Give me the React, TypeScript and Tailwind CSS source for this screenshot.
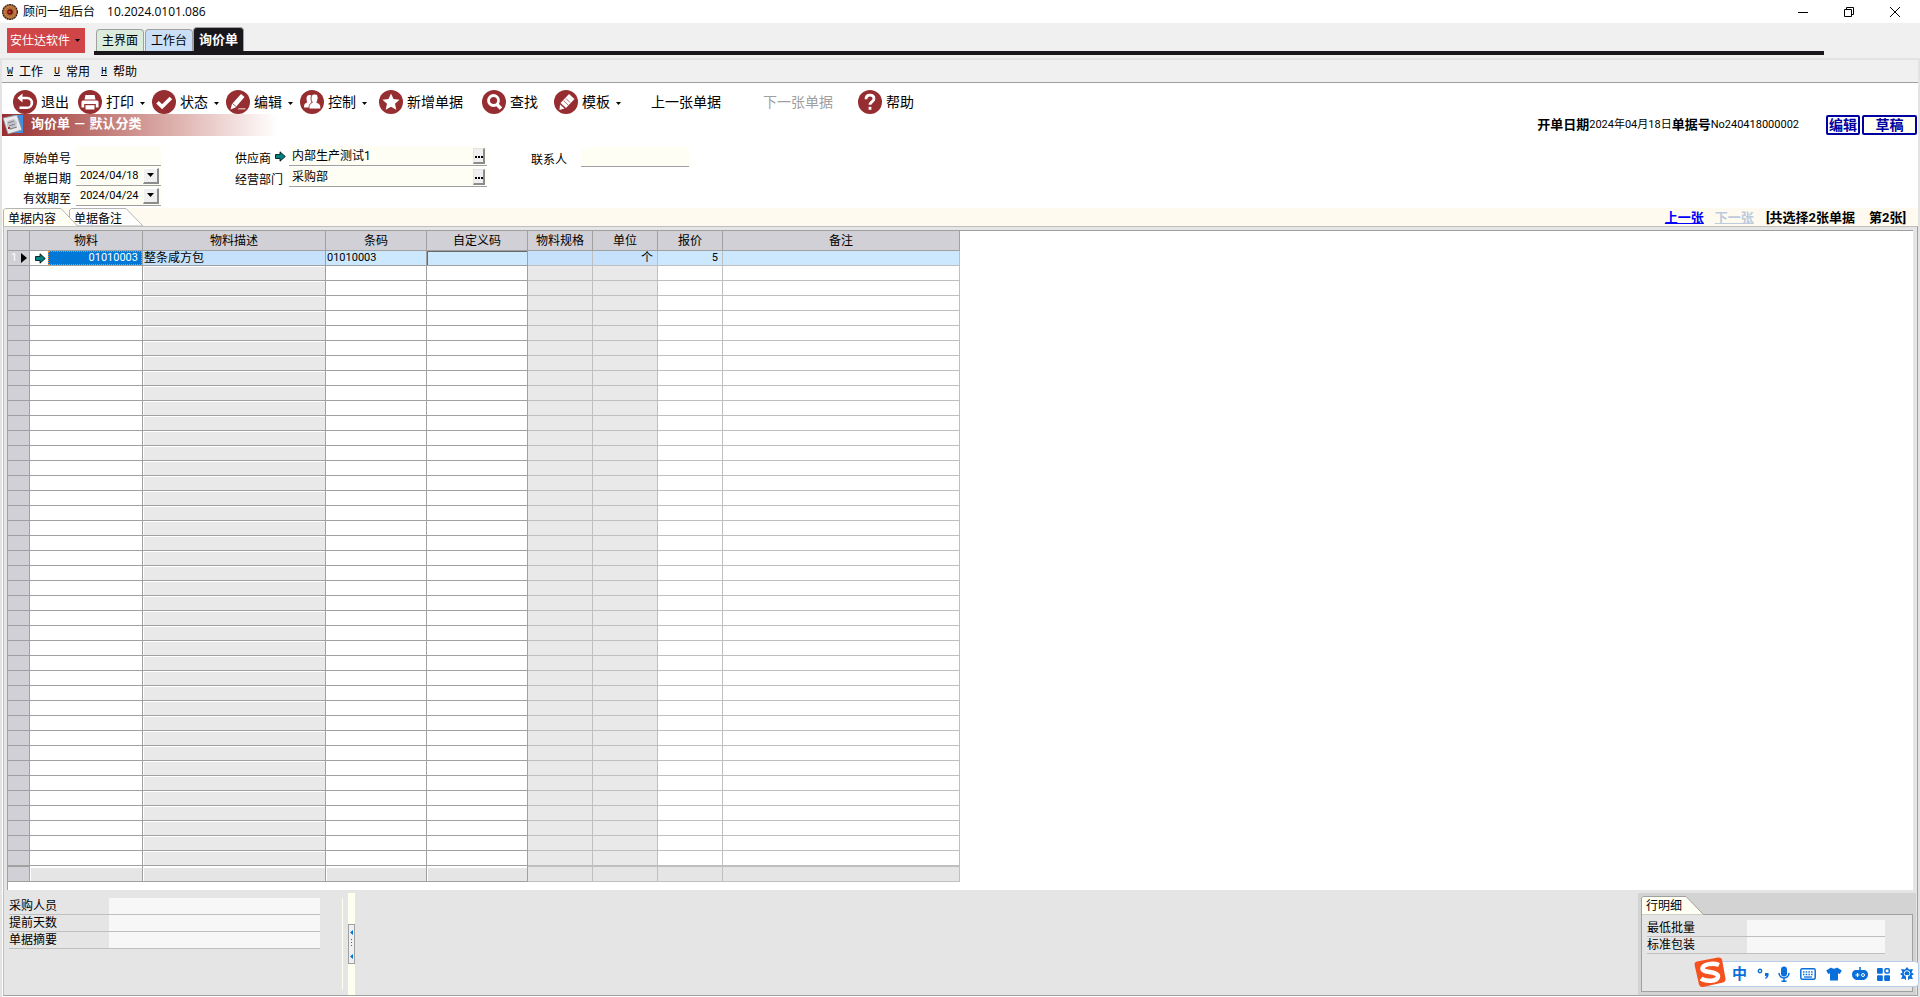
import { useState } from "react";
import type { ReactNode } from "react";

type IconName =
  | "exit"
  | "print"
  | "check"
  | "pencil"
  | "users"
  | "star"
  | "search"
  | "template"
  | "help";

const icons: Record<IconName, ReactNode> = {
  exit: (
    <g fill="none" stroke="#fff" strokeWidth="2.6">
      <path d="M7 8h7a4.900 4.900 0 0 1 0 9.800H6.500" />
      <path d="M9.500 3.500 4.300 8l5.200 4.500z" fill="#fff" stroke="none" />
    </g>
  ),
  print: (
    <g fill="#fff">
      <path d="M7.500 5h9l1 4.500h-11z" />
      <path d="M5 10.500h14a1.500 1.500 0 0 1 1.500 1.500v5.500h-2.700V14H6.200v3.500H3.500V12A1.500 1.500 0 0 1 5 10.500z" />
      <path d="M7.500 15.200h9v4.300h-9z" />
    </g>
  ),
  check: (
    <path d="m5.500 12.200 4.600 4.600 8.800-8.800" fill="none" stroke="#fff" strokeWidth="3.6" />
  ),
  pencil: (
    <g fill="#fff">
      <path d="M15 4 18.500 7 9.500 17.500 4.500 19.500 6 14z" />
      <path d="M13 18h6.500v1.600h-8z" fill="#d9a9aa" />
      <path d="m6.500 13.500 3.500 3" stroke="#962d30" strokeWidth="0.8" />
    </g>
  ),
  users: (
    <g fill="#fff">
      <path d="M9.500 5C12 5 12.500 7 12.300 9c0 2-.8 3-1 4l-1.500 4.500H4c0-3.500.8-4 3.200-5C6.800 11 6.500 10 6.500 8.500 6.500 6 7.800 5 9.500 5z" />
      <path
        d="M14.500 4c3 0 4 2.200 3.500 5-.2 1.500-.8 2.300-1.200 3.500 2.800 1 4 1.800 4 6.500H9c0-4.300.8-5.300 3.300-6.500-.6-1.200-1.200-2-1.300-3.500-.2-3 1-5 3.500-5z"
        stroke="#962d30"
        strokeWidth="0.9"
      />
    </g>
  ),
  star: (
    <path
      d="m12 3.500 2.500 5.600 6 .6-4.500 4.100 1.300 6-5.300-3.100-5.300 3.100 1.300-6-4.500-4.100 6-.6z"
      fill="#fff"
    />
  ),
  search: (
    <g fill="none" stroke="#fff">
      <circle cx="11.500" cy="10.500" r="5" strokeWidth="2.8" />
      <path d="m15 14.500 4 4" strokeWidth="3.4" />
    </g>
  ),
  template: (
    <g fill="#fff">
      <path d="m15 4 5.500 5-8.500 9-5.500-5z" />
      <path d="m6 14.500 4.500 4-5 1.500z" />
      <path d="m9.500 10.500 5 4.800M12 8.500l4 4" stroke="#962d30" strokeWidth="0.7" />
    </g>
  ),
  help: (
    <g fill="none" stroke="#fff" strokeWidth="2.800">
      <path d="M8 9.200C8 6.500 9.800 5.200 12 5.200s4 1.300 4 3.600c0 2.700-4 2.900-4 6" />
      <path d="M12 16.800v3" />
    </g>
  ),
};

type Tool = {
  label: string;
  icon?: IconName;
  menu?: boolean;
  disabled?: boolean;
  space: string;
};

const tools: Tool[] = [
  { label: "退出", icon: "exit", space: "ml-[11px]" },
  { label: "打印", icon: "print", menu: true, space: "ml-[9px]" },
  { label: "状态", icon: "check", menu: true, space: "ml-[7px]" },
  { label: "编辑", icon: "pencil", menu: true, space: "ml-[7px]" },
  { label: "控制", icon: "users", menu: true, space: "ml-[7px]" },
  { label: "新增单据", icon: "star", space: "ml-3" },
  { label: "查找", icon: "search", space: "ml-[19px]" },
  { label: "模板", icon: "template", menu: true, space: "ml-4" },
  { label: "上一张单据", space: "ml-[30px]" },
  { label: "下一张单据", disabled: true, space: "ml-[42px]" },
  { label: "帮助", icon: "help", space: "ml-[25px]" },
];

const columns = [
  { label: "物料", width: "w-[113px]", cell: "border-[#a0a0a0]", readOnly: false },
  { label: "物料描述", width: "w-[183px]", cell: "border-[#a0a0a0]", readOnly: true },
  { label: "条码", width: "w-[101px]", cell: "border-[#a0a0a0]", readOnly: false },
  { label: "自定义码", width: "w-[101px]", cell: "border-[#a0a0a0]", readOnly: false },
  { label: "物料规格", width: "w-[65px]", cell: "border-[#bfbfbf]", readOnly: true },
  { label: "单位", width: "w-[65px]", cell: "border-[#bfbfbf]", readOnly: true },
  { label: "报价", width: "w-[65px]", cell: "border-[#bfbfbf]", readOnly: false },
  { label: "备注", width: "w-[237px]", cell: "border-[#bfbfbf]", readOnly: false },
];

const emptyRows = Array.from({ length: 40 }, (_, i) => i);

function Caret() {
  return (
    <svg className="w-[5px] h-[3px]" viewBox="0 0 5 3">
      <path d="M0 0h5L2.500 3z" fill="#000" />
    </svg>
  );
}

function GreenArrow() {
  return (
    <svg className="w-[11px] h-[11px] shrink-0" viewBox="0 0 11 11">
      <path
        d="M.5 3.500H5V.800l5.300 4.700L5 10.200V7.500H.5z"
        fill="#008080"
        stroke="#000"
        strokeWidth="0.800"
      />
    </svg>
  );
}

function ToolButton({ tool }: { tool: Tool }) {
  return (
    <button
      type="button"
      disabled={tool.disabled}
      className={`${tool.space} flex items-center h-6 text-sm leading-6 whitespace-nowrap ${
        tool.disabled ? "text-[#a0a0a0]" : "text-black"
      }`}
    >
      {tool.icon && (
        <svg className="w-6 h-6 mr-1" viewBox="0 0 24 24">
          <circle cx="12" cy="12" r="12" fill="#962d30" />
          {icons[tool.icon]}
        </svg>
      )}
      {tool.label}
      {tool.menu && (
        <span className="ml-1.5 mt-0.5">
          <Caret />
        </span>
      )}
    </button>
  );
}

function TitleBar() {
  return (
    <header className="flex items-center h-[23px] bg-white pl-0.5">
      <svg className="w-4 h-4" viewBox="0 0 16 16">
        <circle cx="8" cy="8" r="7.400" fill="#b06a35" stroke="#2e1a10" strokeWidth="1.200" strokeDasharray="2 0.600" />
        <circle cx="8" cy="8" r="5.200" fill="none" stroke="#d99a5c" strokeWidth="1" strokeDasharray="1.500 1.500" />
        <circle cx="8" cy="8" r="2.800" fill="#6e0f12" />
        <path d="M6.500 7h2v2h-2z" fill="#e0302c" />
      </svg>
      <h1 className="ml-[5px] text-xs">顾问一组后台</h1>
      <span className="ml-3 text-xs [font-family:'Open_Sans',sans-serif]">
        10.2024.0101.086
      </span>
      <div className="ml-auto flex gap-9 pr-5">
        <button type="button" aria-label="最小化">
          <svg className="w-2.5 h-2.5" viewBox="0 0 10 10">
            <path d="M0 5.500h10" stroke="#000" />
          </svg>
        </button>
        <button type="button" aria-label="还原">
          <svg className="w-2.5 h-2.5" viewBox="0 0 10 10">
            <path d="M.5 2.500h7v7h-7zM2.500 2.500v-2h7v7h-2" fill="none" stroke="#000" />
          </svg>
        </button>
        <button type="button" aria-label="关闭">
          <svg className="w-2.5 h-2.5" viewBox="0 0 10 10">
            <path d="m0 0 10 10M10 0 0 10" stroke="#000" />
          </svg>
        </button>
      </div>
    </header>
  );
}

function WindowTabs() {
  return (
    <div className="flex h-[35px] bg-[#f0f0f0] pl-[7px] pr-24 text-xs">
      <button
        type="button"
        className="mt-[5px] flex items-center justify-between h-[25px] w-[78px] pl-[3px] pr-[5px] bg-[#d04648] text-white whitespace-nowrap"
      >
        安仕达软件
        <Caret />
      </button>
      <nav className="ml-[9px] mt-1 flex flex-1 items-end h-7 border-b-4 border-[#1a171c] pl-0.5">
        <button
          type="button"
          className="w-12 h-[22px] leading-[20px] mr-px rounded-t-sm border border-b-0 border-[#a0a0a0] bg-[#dcecdc]"
        >
          主界面
        </button>
        <button
          type="button"
          className="w-12 h-[22px] leading-[20px] rounded-t-sm border border-b-0 border-[#a0a0a0] bg-[#cadef6]"
        >
          工作台
        </button>
        <button
          type="button"
          className="w-[51px] h-6 rounded-t-sm border border-b-0 border-[#a0a0a0] bg-[#1a171c] text-[13px] leading-[22px] font-bold text-white"
        >
          询价单
        </button>
      </nav>
    </div>
  );
}

function MenuBar() {
  return (
    <nav className="flex items-center gap-[11px] h-[23px] border-b border-[#a0a0a0] bg-[#f0f0f0] pl-[5px] pt-0.5 text-xs">
      {[
        ["W", "工作"],
        ["U", "常用"],
        ["H", "帮助"],
      ].map(([key, label]) => (
        <button type="button" key={key} className="flex items-center gap-1.5">
          <u className="text-[10px] [font-family:'Liberation_Mono',monospace]">{key}</u>
          {label}
        </button>
      ))}
    </nav>
  );
}

function DocumentHeading() {
  return (
    <div className="flex items-center justify-between h-[22px]">
      <div className="flex items-center w-[275px] h-[22px] bg-linear-to-r from-[#962d30] to-white">
        <svg className="w-[22px] h-[20px]" viewBox="0 0 22 20">
          <path d="M10 0h11v18H10z" fill="#3f8fe0" />
          <path d="m1 3 14-3 5 15-14 4z" fill="#e9e9ec" stroke="#8b8f9a" strokeWidth="0.800" />
          <path d="m5 6 7-2 3 3-1 6-6 2-3-4z" fill="#c4c6cc" />
          <path d="m6 8 6-2M7 11l6-2M8 14l7-2" stroke="#666a75" strokeWidth="0.800" />
          <path d="M6 12h2v2H6z" fill="#b02a2a" />
        </svg>
        <h2 className="ml-[7px] mb-0.5 text-[13px] leading-5 font-bold text-white whitespace-pre">
          询价单 － 默认分类
        </h2>
      </div>
      <div className="flex items-center whitespace-nowrap leading-5">
        <b className="text-[13px]">开单日期</b>
        <span className="text-[11px]">2024年04月18日</span>
        <b className="text-[13px]">单据号</b>
        <span className="text-[11px]">No240418000002</span>
        <button
          type="button"
          className="ml-[27px] w-[34px] h-5 border-2 border-[#0000a0] rounded-xs bg-white text-sm leading-4 font-bold text-[#0000a0]"
        >
          编辑
        </button>
        <button
          type="button"
          className="ml-0.5 mr-px w-[55px] h-5 border-2 border-[#0000a0] rounded-xs bg-[#fffff4] text-sm leading-4 font-bold text-[#0000a0]"
        >
          草稿
        </button>
      </div>
    </div>
  );
}

type FieldProps = {
  id: string;
  label: string;
  value?: string;
  labelWidth: string;
  width: string;
  arrow?: boolean;
  action?: "date" | "lookup";
};

function Field({ id, label, value = "", labelWidth, width, arrow, action }: FieldProps) {
  return (
    <div className="flex items-center h-5">
      <label htmlFor={id} className={`${labelWidth} flex items-start gap-1 pt-1.5 text-xs leading-4`}>
        {label}
        {arrow && <GreenArrow />}
      </label>
      <div className={`${width} flex items-center h-5 border-b border-[#a0a0a0] bg-[#fefef4]`}>
        <input
          id={id}
          defaultValue={value}
          className={`min-w-0 flex-1 bg-transparent outline-none leading-4 ${
            action === "date" ? "pl-1 text-[11px]" : "pl-[3px] text-xs"
          }`}
        />
        {action === "date" && (
          <button
            type="button"
            aria-label={`选择${label}`}
            className="flex items-center justify-center w-4 h-4 mr-0.5 border-r-2 border-b-2 border-t border-l border-t-white border-l-white border-[#8c8c8c] bg-[#f0f0f0]"
          >
            <svg className="w-[7px] h-1 shrink-0" viewBox="0 0 7 4">
              <path d="M0 0h7L3.500 4z" />
            </svg>
          </button>
        )}
        {action === "lookup" && (
          <button
            type="button"
            aria-label={`查找${label}`}
            className="flex items-end justify-center w-3 h-4 pb-1 mr-0.5 border-r-2 border-b-2 border-t border-l border-t-[#e3e3e3] border-l-[#e3e3e3] border-[#8c8c8c] bg-[#f0f0f0]"
          >
            <svg className="w-2 h-0.5 shrink-0" viewBox="0 0 8 2">
              <path d="M0 0h2v2H0zM3 0h2v2H3zM6 0h2v2H6z" />
            </svg>
          </button>
        )}
      </div>
    </div>
  );
}

function DocumentForm() {
  return (
    <form className="flex items-start h-[72px] pt-2.5 pl-[21px]">
      <div className="flex flex-col">
        <Field id="origin" label="原始单号" labelWidth="w-[53px]" width="w-[85px]" />
        <Field
          id="date"
          label="单据日期"
          value="2024/04/18"
          labelWidth="w-[53px]"
          width="w-[85px]"
          action="date"
        />
        <Field
          id="expire"
          label="有效期至"
          value="2024/04/24"
          labelWidth="w-[53px]"
          width="w-[85px]"
          action="date"
        />
      </div>
      <div className="ml-[74px] flex flex-col gap-px">
        <Field
          id="supplier"
          label="供应商"
          value="内部生产测试1"
          labelWidth="w-[54px]"
          width="w-[198px]"
          action="lookup"
          arrow
        />
        <Field
          id="department"
          label="经营部门"
          value="采购部"
          labelWidth="w-[54px]"
          width="w-[198px]"
          action="lookup"
        />
      </div>
      <div className="ml-11 pt-px">
        <Field id="contact" label="联系人" labelWidth="w-[50px]" width="w-[108px]" />
      </div>
    </form>
  );
}

function DetailTabs() {
  const [tab, setTab] = useState(0);

  return (
    <div className="flex items-center h-[18px] bg-[#fffaf0] text-xs leading-[18px]">
      <div className="relative flex h-[18px] w-[150px]">
        <svg className="absolute inset-0 w-[150px] h-[18px]" viewBox="0 0 150 18">
          <path d="M67.500 18V2l2-1.500H124L141 18z" fill="#fff" stroke="#b4b4b4" />
          <path d="M1.500 19V2l2-1.500H59L76 18.500z" fill="#fffff4" stroke="#b4b4b4" />
        </svg>
        {["单据内容", "单据备注"].map((label, i) => (
          <button
            type="button"
            key={label}
            aria-pressed={tab === i}
            onClick={() => setTab(i)}
            className="relative w-[66px] pl-1.5 pt-0.5 text-left"
          >
            {label}
          </button>
        ))}
      </div>
      <div className="ml-auto flex items-center pr-3 pt-0.5 text-[13px] font-bold whitespace-pre">
        <a href="#prev" className="text-[#0000ff] underline">
          上一张
        </a>
        <a href="#next" className="ml-[11px] text-[#bccbdd] underline">
          下一张
        </a>
        <span className="ml-3">[共选择2张单据</span>
        <span className="ml-[14px]">第2张]</span>
      </div>
    </div>
  );
}

function ItemGrid() {
  return (
    <table className="table-fixed border-separate border-spacing-0 w-[952px] text-xs leading-[14px]">
      <thead>
        <tr className="h-5 bg-[#d0d0d6]">
          <th className="w-[22px] p-0 border-r border-b border-[#a0a0a0]" />
          {columns.map((c) => (
            <th
              key={c.label}
              className={`${c.width} p-0 border-r border-b border-[#a0a0a0] font-normal`}
            >
              {c.label}
            </th>
          ))}
        </tr>
      </thead>
      <tbody>
        <tr className="h-[15px] bg-[#cce8ff]">
          <td className="p-0 border-r border-b border-[#a0a0a0] bg-[#d0d0d6]">
            <div className="flex items-center justify-between pl-[3px] pr-0.5 text-[11px] text-white">
              1
              <svg className="w-1.5 h-2.5" viewBox="0 0 6 10">
                <path d="M0 0v10l6-5z" fill="#000" />
              </svg>
            </div>
          </td>
          <td className="p-0 border-r border-b border-[#a0a0a0] bg-white">
            <div className="flex items-center h-[14px] pl-[5px]">
              <GreenArrow />
              <span className="ml-0.5 flex-1 h-[14px] border border-dotted border-[#ff8728] bg-[#0078d7] pr-[3px] text-right text-[11px] leading-3 text-white">
                01010003
              </span>
            </div>
          </td>
          <td className="p-0 pl-px border-r border-b border-[#a0a0a0] bg-[#c5e1fb]">整条咸方包</td>
          <td className="p-0 pl-px border-r border-b border-[#a0a0a0] text-[11px]">01010003</td>
          <td className="p-0 border-r border-b border-[#a0a0a0] shadow-[inset_1px_1px_0_#696969]" />
          <td className="p-0 border-r border-b border-[#bfbfbf] bg-[#c5e1fb]" />
          <td className="p-0 pr-1 border-r border-b border-[#bfbfbf] bg-[#c5e1fb] text-right">个</td>
          <td className="p-0 pr-1 border-r border-b border-[#bfbfbf] text-right text-[11px]">5</td>
          <td className="p-0 border-r border-b border-[#bfbfbf]" />
        </tr>
        {emptyRows.map((row) => (
          <tr key={row} className="h-[15px]">
            <td className="p-0 border-r border-b border-[#a0a0a0] bg-[#d0d0d6]" />
            {columns.map((c, i) => (
              <td
                key={c.label}
                className={`p-0 border-r border-b ${c.cell} ${
                  c.readOnly ? "bg-[#e9e9e9]" : "bg-white"
                } ${i === 1 ? "shadow-[inset_1px_1px_0_#fff]" : ""}`}
              />
            ))}
          </tr>
        ))}
      </tbody>
      <tfoot>
        <tr className="h-4">
          <td className="p-0 border-r border-b border-t border-[#a0a0a0] bg-[#d0d0d6]" />
          {columns.map((c, i) => (
            <td
              key={c.label}
              className={`p-0 border-r border-b bg-[#e5e5e5] ${c.cell} ${
                i < 4 ? "shadow-[inset_1px_2px_0_#fff]" : "border-t"
              }`}
            />
          ))}
        </tr>
      </tfoot>
    </table>
  );
}

function NoteField({ id, label, width }: { id: string; label: string; width: string }) {
  return (
    <div className="flex h-[17px] border-b border-[#bfbfbf]">
      <label htmlFor={id} className="w-[100px] text-xs leading-4">
        {label}
      </label>
      <input id={id} className={`${width} h-4 bg-[#f7f7f7] outline-none text-xs`} />
    </div>
  );
}

function FooterPanel() {
  return (
    <div className="flex flex-1 min-h-[105px] pl-[5px] pt-[3px]">
      <div className="w-[334px] mt-[5px] mb-[5px] border-r border-[#fffff0]">
        <div className="w-[311px]">
          <NoteField id="buyer" label="采购人员" width="w-[211px]" />
          <NoteField id="lead" label="提前天数" width="w-[211px]" />
          <NoteField id="summary" label="单据摘要" width="w-[211px]" />
        </div>
      </div>
      <div className="ml-[5px] w-[7px] bg-[#fffff0] pt-[31px]">
        <button
          type="button"
          aria-label="收起"
          className="block w-[7px] h-10 border border-[#a0a0a0] bg-[#f0f0f0]"
        >
          <svg className="w-[5px] h-[38px]" viewBox="0 0 5 38">
            <path d="M4 5v5L1 7.500zM4 29v5l-3-2.500z" fill="#0078d7" />
            <path d="M2 14h1v1H2zM2 17h1v1H2zM2 20h1v1H2z" fill="#0078d7" />
          </svg>
        </button>
      </div>
      <section className="ml-auto mr-px flex flex-col w-[278px] p-[3px] bg-[#d3d3d3]">
        <div className="relative h-[18px]">
          <svg className="absolute left-0 top-0 w-[64px] h-[19px]" viewBox="0 0 64 19">
            <path d="M.5 19V2l2-1.500H45L62.500 18.500V19z" fill="#fffff4" stroke="#a0a0a0" />
          </svg>
          <h3 className="relative pl-[5px] text-xs leading-5">行明细</h3>
        </div>
        <div className="flex-1 border border-[#a0a0a0] bg-[#e5e5e5] pl-[5px] pt-[5px]">
          <div className="w-[238px]">
            <NoteField id="minimum" label="最低批量" width="w-[138px]" />
            <NoteField id="package" label="标准包装" width="w-[138px]" />
          </div>
        </div>
      </section>
    </div>
  );
}

// input method toolbar floating over the window corner
function InputMethodBar() {
  return (
    <div className="fixed right-px bottom-2.5 flex items-center justify-between h-[26px] w-[219px] pl-[31px] pr-1 rounded-sm border border-[#b7cdea] bg-white text-[#0a6fdb]">
      <svg className="absolute -left-[7px] -top-[5px] w-8 h-[31px]" viewBox="0 0 32 31">
        <path d="M3 4.500 24 .5q3-.5 4 2l3.500 19q.3 3-2.500 4L9 30q-3 .5-4-2.500L.6 8Q.2 5.200 3 4.500z" fill="#f4511e" />
        <path
          d="M25 8C19 5.500 9 7 8.500 11.500S24.500 14 24 19.500 11 24.500 7 21.500"
          fill="none"
          stroke="#fff"
          strokeWidth="4.500"
        />
      </svg>
      <span className="text-[15px] leading-5 font-bold">中</span>
      <svg className="w-3 h-3" viewBox="0 0 12 12">
        <circle cx="3" cy="3" r="1.700" fill="none" stroke="currentColor" strokeWidth="1.400" />
        <path d="M8 5h3.500c.5 3-.5 5-3 6l-.5-1c1-.6 1.400-1.200 1.400-2H8z" fill="currentColor" />
      </svg>
      <svg className="w-3 h-4" viewBox="0 0 12 16" fill="none" stroke="currentColor" strokeWidth="1.500">
        <rect x="3" y="0.500" width="6" height="10" rx="3" fill="currentColor" stroke="none" />
        <path d="M1 7c0 6.500 10 6.500 10 0M6 12v3.200M3.500 15.200h5" />
      </svg>
      <svg className="w-4 h-3" viewBox="0 0 16 12">
        <rect x="0.800" y="0.800" width="14.400" height="10.400" rx="1.500" fill="none" stroke="currentColor" strokeWidth="1.500" />
        <path d="M3 4h10M3 6.500h10" stroke="currentColor" strokeWidth="1.500" strokeDasharray="1.500 1.200" />
        <path d="M4 9h8" stroke="currentColor" strokeWidth="1.300" />
      </svg>
      <svg className="w-4 h-[14px]" viewBox="0 0 16 14">
        <path d="M5 .5c1 1.500 5 1.500 6 0l4.800 3-2 3.500-1.800-.8V13.500H4V6.200L2.200 7l-2-3.500z" fill="currentColor" />
      </svg>
      <svg className="w-4 h-[14px]" viewBox="0 0 16 14">
        <path d="M7.200 0h1.600v3H13q3 1 3 4.500T12 13H4Q0 11 0 7.500T3 3h4.200z" fill="currentColor" />
        <path d="M3.500 8h4M5.500 6v4" stroke="#fff" strokeWidth="1.200" />
        <circle cx="11" cy="8" r="1.500" fill="none" stroke="#fff" />
      </svg>
      <svg className="w-[13px] h-[13px]" viewBox="0 0 13 13" fill="currentColor">
        <rect width="5.800" height="5.800" rx="1" />
        <rect x="8" y="0.800" width="4.200" height="4.200" rx="1" fill="none" stroke="currentColor" strokeWidth="1.500" />
        <rect y="7.200" width="5.800" height="5.800" rx="1" />
        <rect x="7.200" y="7.200" width="5.800" height="5.800" rx="1" />
      </svg>
      <svg className="w-[14px] h-[14px]" viewBox="0 0 14 14">
        <path
          d="m7 0 2 2.500 4-.5-1.500 3.500L14 7l-2.500 1.800L13 12l-3.500-.3L8 13.500V8H6v5.500l-1.500-1.800L1 12l1.500-3.200L0 7l2.500-1.500L1 2l4 .5z"
          fill="currentColor"
        />
        <circle cx="7" cy="6.500" r="2.800" fill="none" stroke="#fff" strokeWidth="0.900" />
      </svg>
    </div>
  );
}

export default function App() {
  return (
    <div className="min-h-screen flex flex-col bg-[#f0f0f0] text-black [font-family:Roboto,'Noto_Sans_CJK_SC',sans-serif]">
      <TitleBar />
      <WindowTabs />
      <main className="flex flex-1 flex-col border-2 border-b-0 border-[#e3e3e3] bg-white">
        <MenuBar />
        <div className="flex items-end h-[31px]">
          {tools.map((tool) => (
            <ToolButton key={tool.label} tool={tool} />
          ))}
        </div>
        <DocumentHeading />
        <DocumentForm />
        <DetailTabs />
        <div className="flex flex-1 flex-col ml-px mb-px border border-b-[#a0a0a0] border-r-[#a0a0a0] border-[#bfbfbf] bg-[#e5e5e5]">
          <div className="mt-[3px] ml-[3px] mr-1 border-t border-l border-[#a0a0a0] bg-white pb-2">
            <ItemGrid />
          </div>
          <FooterPanel />
        </div>
      </main>
      <InputMethodBar />
    </div>
  );
}
